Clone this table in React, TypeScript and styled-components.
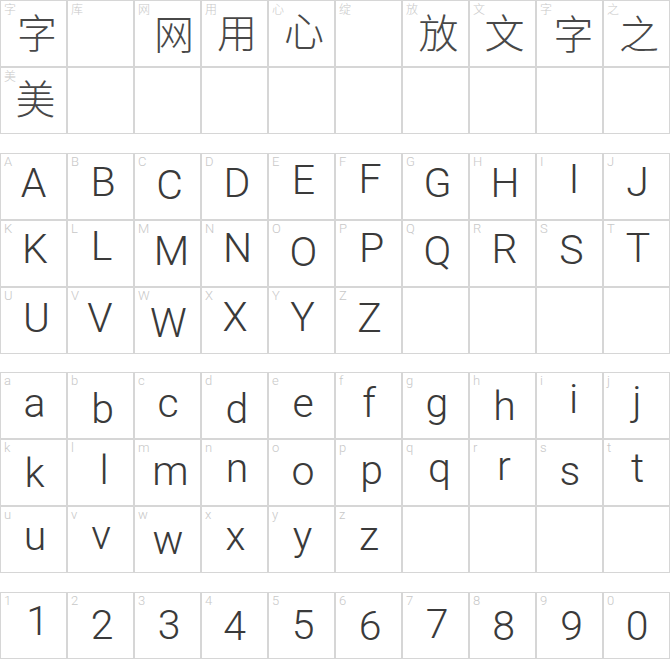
import React from "react";
import styled, { createGlobalStyle } from "styled-components";

// [label, glyph, dx, dy]
type CellData = [string, string, number, number];

const GlobalStyle = createGlobalStyle`
  html, body {
    margin: 0;
    padding: 0;
    background: #ffffff;
  }
`;

const Page = styled.div`
  width: 670px;
  display: flex;
  flex-direction: column;
  gap: 18.5px;
`;

const Grid = styled.div`
  display: grid;
  grid-template-columns: repeat(10, 67px);
  grid-auto-rows: 67px;
`;

const Cell = styled.div<{ $cjk?: boolean }>`
  box-sizing: border-box;
  border: 1px solid #d6d6d6;
  display: flex;
  flex-direction: column;
  font-family: ${(p) =>
    p.$cjk
      ? `"Noto Sans CJK SC Light", "Noto Sans CJK SC DemiLight", "Noto Sans CJK SC", "Noto Sans", sans-serif`
      : `Roboto, "Liberation Sans", sans-serif`};
  font-weight: 300;
`;

const Label = styled.div<{ $cjk?: boolean }>`
  height: 14px;
  padding: 1px 0 0 3px;
  font-size: ${(p) => (p.$cjk ? "12px" : "13px")};
  line-height: 14px;
  color: #c8c8c8;
  white-space: nowrap;
`;

const Glyph = styled.div<{ $cjk?: boolean }>`
  font-size: ${(p) => (p.$cjk ? "40px" : "41px")};
  line-height: ${(p) => (p.$cjk ? "26px" : "41px")};
  color: ${(p) => (p.$cjk ? "#484848" : "#3a3a3a")};
  text-align: center;
`;

const cjk: CellData[] = [
  ["字", "字", 3.5, 2.2],
  ["库", "", 0, 0],
  ["网", "网", 6.5, 2.7],
  ["用", "用", 2.5, 2.2],
  ["心", "心", 2.5, 0.2],
  ["绽", "", 0, 0],
  ["放", "放", 3, 2.2],
  ["文", "文", 2, 2.2],
  ["字", "字", 4, 3.2],
  ["之", "之", 2.5, 2.7],
  ["美", "美", 2, 0.7],
];

const upper: CellData[] = [
  ["A", "A", 0, -6.5],
  ["B", "B", 2.5, -7.5],
  ["C", "C", 2, -4],
  ["D", "D", 2.5, -6.5],
  ["E", "E", 2, -9.5],
  ["F", "F", 1.5, -10.5],
  ["G", "G", 2, -6],
  ["H", "H", 2.5, -6.5],
  ["I", "I", 4.5, -10.5],
  ["J", "J", 1, -7.5],
  ["K", "K", 1.5, -7.5],
  ["L", "L", 1, -10.5],
  ["M", "M", 4, -5.5],
  ["N", "N", 3, -8.5],
  ["O", "O", 2, -4],
  ["P", "P", 3, -8.5],
  ["Q", "Q", 2, -5.5],
  ["R", "R", 2, -7.5],
  ["S", "S", 2, -6.5],
  ["T", "T", 1.5, -8.5],
  ["U", "U", 3, -5.5],
  ["V", "V", -0.5, -5.5],
  ["W", "W", 1, -0.5],
  ["X", "X", 0.5, -6.5],
  ["Y", "Y", 1, -6.5],
  ["Z", "Z", 1, -5.5],
];

const lower: CellData[] = [
  ["a", "a", 1, -5.5],
  ["b", "b", 2, 0.5],
  ["c", "c", 0.5, -5.5],
  ["d", "d", 2.5, 0.5],
  ["e", "e", 1.5, -5.5],
  ["f", "f", 0.5, -5.5],
  ["g", "g", 1.5, -5.5],
  ["h", "h", 2, -2.5],
  ["i", "i", 4, -9.5],
  ["j", "j", 0.5, -7.5],
  ["k", "k", 1, -2.5],
  ["l", "l", 3.5, -5.5],
  ["m", "m", 3, -4.5],
  ["n", "n", 2.5, -7.5],
  ["o", "o", 1.5, -4.5],
  ["p", "p", 3, -5.5],
  ["q", "q", 4, -7.5],
  ["r", "r", 1.5, -9.5],
  ["s", "s", 0.5, -4.5],
  ["t", "t", 1, -7.5],
  ["u", "u", 1.5, -6.5],
  ["v", "v", 0.5, -7.5],
  ["w", "w", 0.5, -2.5],
  ["x", "x", 1, -6.5],
  ["y", "y", 1, -6.5],
  ["z", "z", 0.5, -6.5],
];

const digits: CellData[] = [
  ["1", "1", 4, -7.5],
  ["2", "2", 1.5, -3.5],
  ["3", "3", 1.5, -3.5],
  ["4", "4", 0, -2.5],
  ["5", "5", 1.5, -3.5],
  ["6", "6", 1.5, -2.5],
  ["7", "7", 1.5, -4.5],
  ["8", "8", 1, -2.5],
  ["9", "9", 2, -2.5],
  ["0", "0", 0.5, -2.5],
];

const sections: { cjk?: boolean; cells: CellData[] }[] = [
  { cjk: true, cells: cjk },
  { cells: upper },
  { cells: lower },
  { cells: digits },
];

// fill the last row of a section with blank cells
const padRow = (cells: CellData[]): CellData[] => {
  const out = [...cells];
  while (out.length % 10 !== 0) out.push(["", "", 0, 0]);
  return out;
};

const App: React.FC = () => {
  return (
    <>
      <GlobalStyle />
      <Page>
        {sections.map((section, s) => (
          <Grid key={s}>
            {padRow(section.cells).map(([label, glyph, dx, dy], i) => (
              <Cell key={`${s}-${i}`} $cjk={section.cjk}>
                <Label $cjk={section.cjk}>{label}</Label>
                {glyph && (
                  <Glyph
                    $cjk={section.cjk}
                    style={{ transform: `translate(${dx}px, ${dy}px)` }}
                  >
                    {glyph}
                  </Glyph>
                )}
              </Cell>
            ))}
          </Grid>
        ))}
      </Page>
    </>
  );
};

export default App;
